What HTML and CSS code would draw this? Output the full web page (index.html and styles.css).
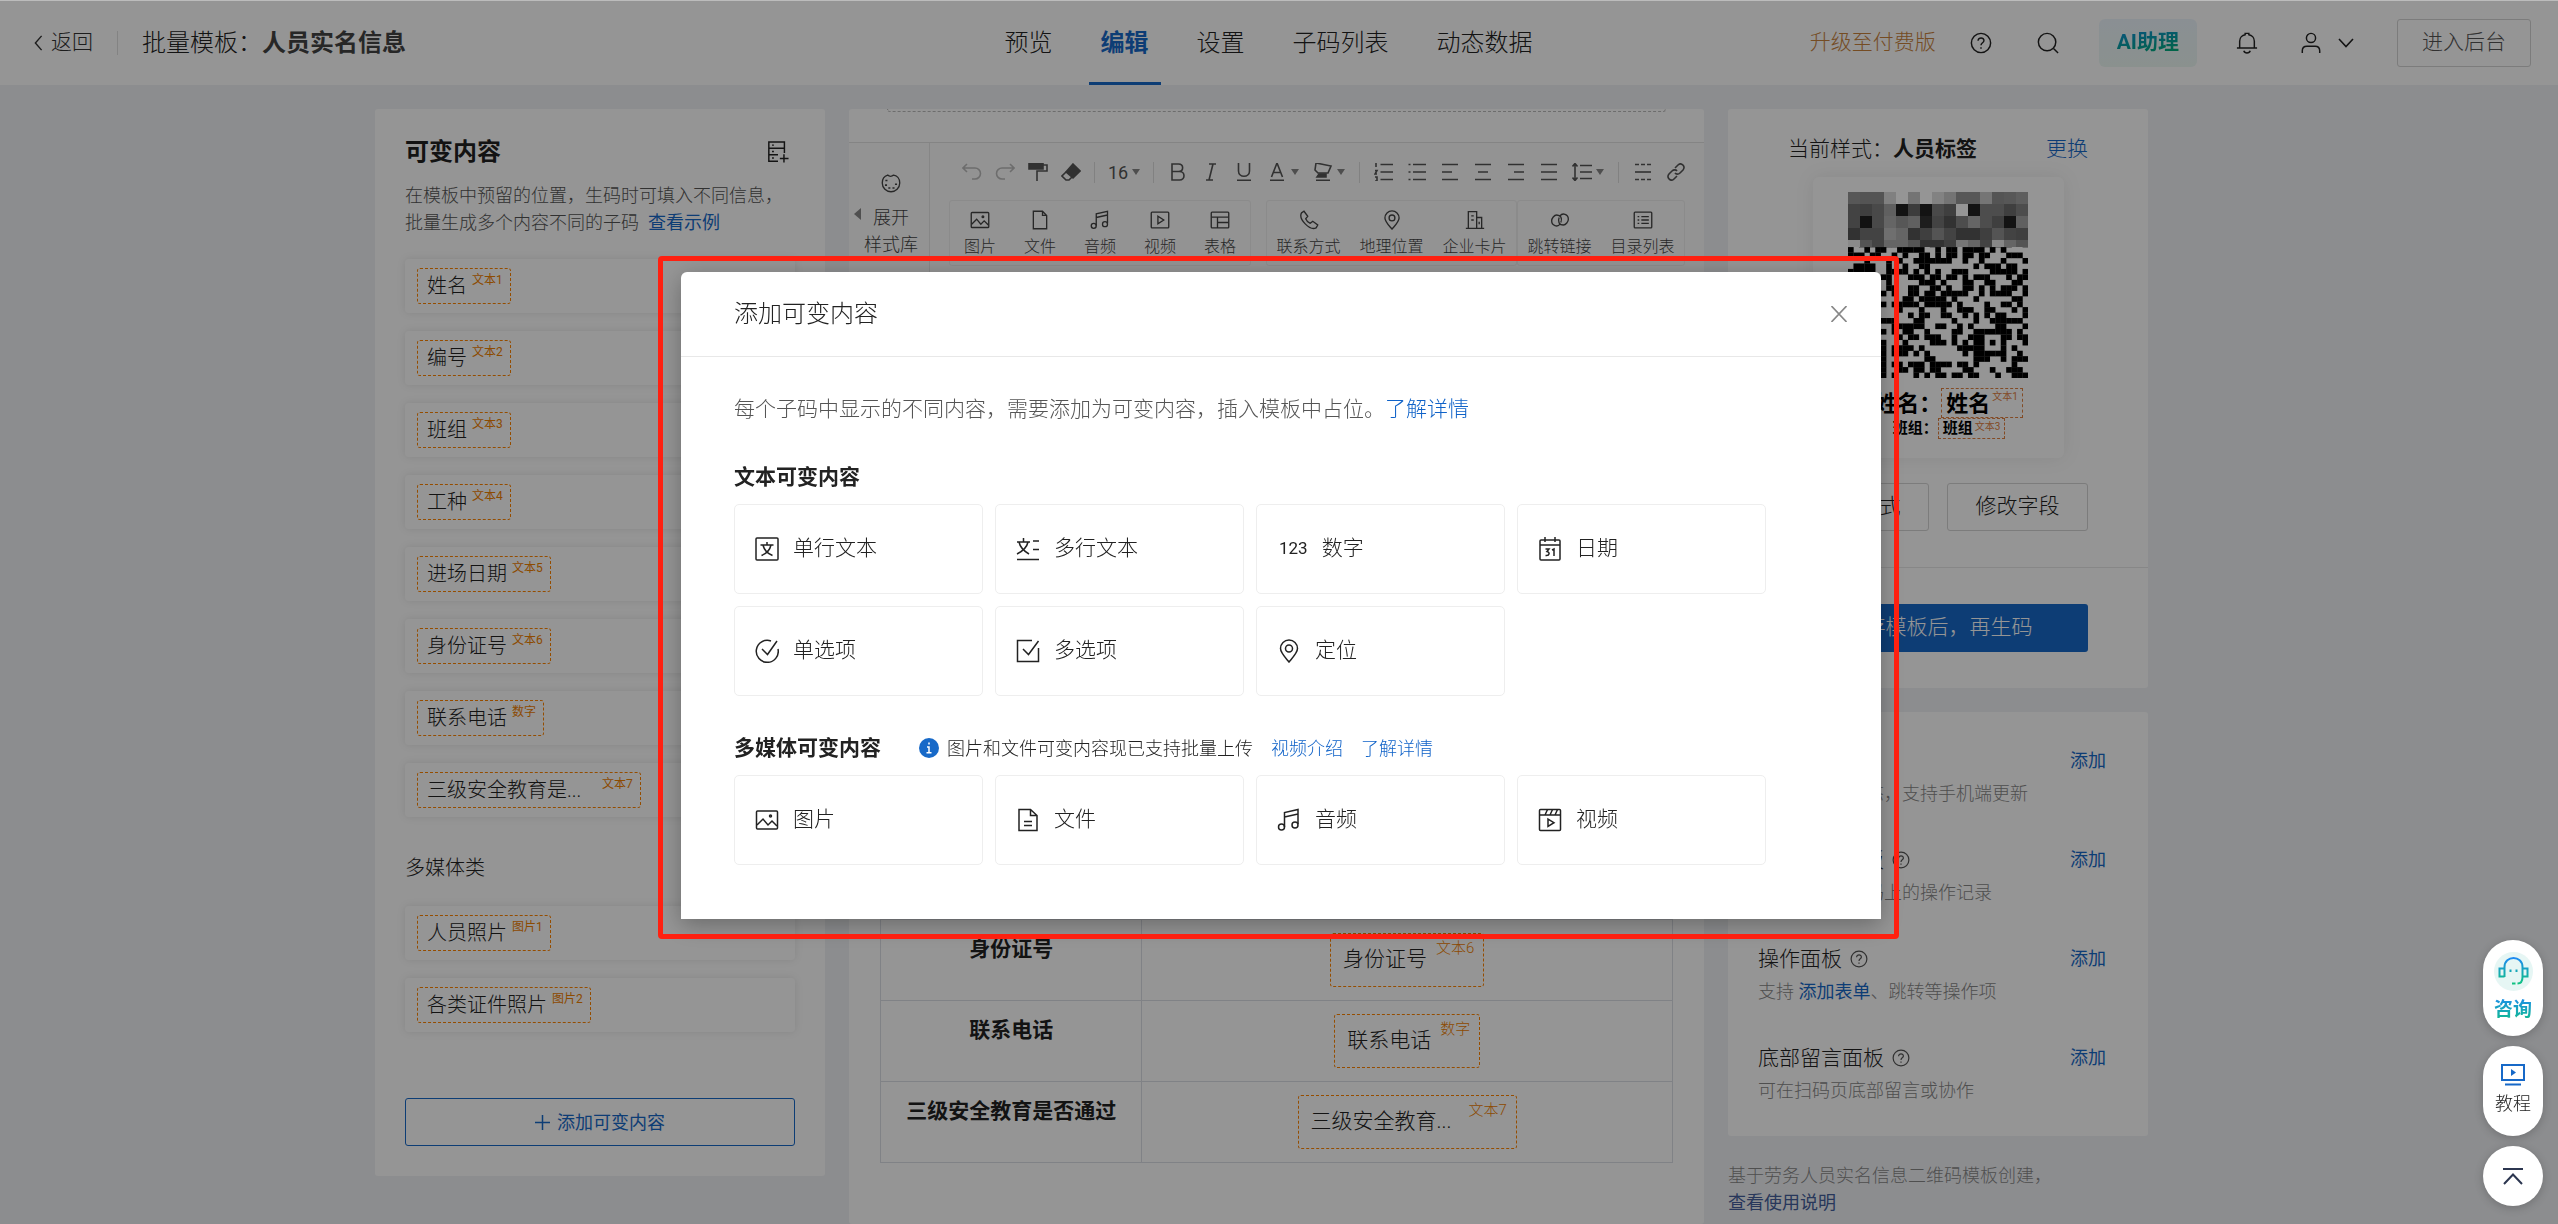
FILE: index.html
```html
<!DOCTYPE html>
<html lang="zh-CN">
<head>
    <meta charset="UTF-8">
    <meta name="viewport" content="width=device-width, initial-scale=1.0">
    <title>批量模板：人员实名信息</title>
    <link rel="stylesheet" href="styles.css">
</head>
<body>
    <!-- Shared icons -->
    <svg class="sprite" width="0" height="0" aria-hidden="true">
        <symbol id="i-help" viewBox="0 0 24 24"><circle cx="12" cy="12" r="10.5"/><path d="M8.8 9.6c0-4.2 6.6-4 6.4-.1-.1 2.300-3.200 2.300-3.200 5M12 16.600v1.800"/></symbol>
        <symbol id="i-image" viewBox="0 0 24 24"><rect x="1.500" y="3" width="21" height="18" rx="1"/><path d="M2 17l6-6 5 6 4-4 5 5"/><circle cx="15.500" cy="8" r="1"/></symbol>
        <symbol id="i-file" viewBox="0 0 24 24"><path d="M4 1.500h11l5 5v16H4zM15 1.500v5h5"/></symbol>
        <symbol id="i-music" viewBox="0 0 24 24"><path d="M7.500 19V4.500L21 1.500V16M7.500 9L21 6"/><circle cx="4.500" cy="19" r="3"/><circle cx="18" cy="17" r="3"/></symbol>
        <symbol id="i-pin" viewBox="0 0 24 24"><path d="M12 23C7 17 3.500 13.500 3.500 9.500a8.500 8.500 0 0 1 17 0C20.500 13.500 17 17 12 23z"/><circle cx="12" cy="9.500" r="3.500"/></symbol>
        <symbol id="i-caret" viewBox="0 0 8 6"><path d="M0 0h8L4 6z" fill="currentColor" stroke="none"/></symbol>
    </svg>

    <header class="topbar">
        <div class="topbar-left">
            <a class="back" href="#"><svg class="icon chevron-left" viewBox="0 0 10 18"><path d="M8.500 1L1.500 9l7 8"/></svg>返回</a>
            <span class="divider"></span>
            <div class="doc-name">批量模板：<strong>人员实名信息</strong></div>
        </div>
        <nav class="tabs">
            <a href="#">预览</a>
            <a class="active" href="#">编辑</a>
            <a href="#">设置</a>
            <a href="#">子码列表</a>
            <a href="#">动态数据</a>
        </nav>
        <div class="topbar-right">
            <a class="upgrade" href="#">升级至付费版</a>
            <button class="icon-btn help-btn" aria-label="帮助"><svg class="icon"><use href="#i-help"/></svg></button>
            <button class="icon-btn search-btn" aria-label="搜索"><svg class="icon" viewBox="0 0 24 24"><circle cx="11" cy="11" r="9.500"/><path d="M18 18l5 5"/></svg></button>
            <button class="ai-btn"><span>AI助理</span></button>
            <button class="icon-btn bell-btn" aria-label="通知"><svg class="icon" viewBox="0 0 24 24"><path d="M1 17.500h22M4 17.500V10c0-4 3-6.500 6-7V1.500h4V3c3 .5 6 3 6 7v7.500M8.500 20.500c1 3.300 6 3.300 7 0"/></svg></button>
            <button class="user-btn" aria-label="账户"><svg class="icon" viewBox="0 0 24 24"><circle cx="12" cy="6.500" r="5"/><path d="M2.500 23v-2.500c0-3 2-5 5-5h9c3 0 5 2 5 5V23"/></svg><svg class="icon chevron-down" viewBox="0 0 16 10"><path d="M1 1l7 7.500L15 1"/></svg></button>
            <button class="outline-btn console-btn">进入后台</button>
        </div>
    </header>

    <main class="layout">
        <!-- Left: variable fields -->
        <section class="panel fields">
            <div class="fields-head">
                <h2>可变内容</h2>
                <button class="icon-btn" aria-label="管理可变内容"><svg class="icon" viewBox="0 0 24 24"><path d="M12 22H2V1h17v12M2 8h17M2 15h10M18.500 14.500v9M14 19h9.500"/><path d="M5.500 4.500h2M5.500 11.500h2M5.500 18.500h2"/></svg></button>
            </div>
            <p class="fields-desc">在模板中预留的位置，生码时可填入不同信息，<br>批量生成多个内容不同的子码<a href="#">查看示例</a></p>
            <ul class="field-list">
                <li><span class="tag">姓名<sup>文本1</sup></span></li>
                <li><span class="tag">编号<sup>文本2</sup></span></li>
                <li><span class="tag">班组<sup>文本3</sup></span></li>
                <li><span class="tag">工种<sup>文本4</sup></span></li>
                <li><span class="tag">进场日期<sup>文本5</sup></span></li>
                <li><span class="tag">身份证号<sup>文本6</sup></span></li>
                <li><span class="tag">联系电话<sup>数字</sup></span></li>
                <li><span class="tag"><span class="cut">三级安全教育是...</span><sup>文本7</sup></span></li>
            </ul>
            <h3>多媒体类</h3>
            <ul class="field-list">
                <li><span class="tag">人员照片<sup>图片1</sup></span></li>
                <li><span class="tag">各类证件照片<sup>图片2</sup></span></li>
            </ul>
            <button class="add-field"><svg class="icon" viewBox="0 0 16 16"><path d="M8 0v16M0 8h16"/></svg>添加可变内容</button>
        </section>

        <!-- Middle: editor -->
        <section class="panel editor">
            <div class="cover-end"></div>
            <div class="editor-tools">
                <button class="style-lib">
                    <svg class="fold" viewBox="0 0 7 12"><path d="M7 0v12L0 6z"/></svg>
                    <svg class="icon" viewBox="0 0 24 24"><path d="M8 2.500c2 2 5 2 7 0 4 .5 7.500 4 7.500 9.500 0 6-5 10.500-10.500 10.500S1.500 18 1.500 12C1.500 7 4.500 3.500 8 2.500z"/><path d="M6.500 8v2M6 13.500v2M10 17v2M15 17v2M18 12.500v2" stroke-width="2.500"/></svg>
                    <span>展开<br>样式库</span>
                </button>
                <div class="tool-area">
                    <div class="toolbar">
                        <button class="off" aria-label="撤销"><svg class="icon" viewBox="0 0 20 18"><path d="M5 1L1 5l4 4M1 5h12a5.500 5.500 0 0 1 0 11h-3"/></svg></button>
                        <button class="off" aria-label="重做"><svg class="icon" viewBox="0 0 20 18"><path d="M15 1l4 4-4 4M19 5H7a5.500 5.500 0 0 0 0 11h3"/></svg></button>
                        <button aria-label="格式刷"><svg class="icon" viewBox="0 0 20 18"><path d="M1 0h14v6H1z" fill="currentColor"/><path d="M15 2h4v6H9v10"/></svg></button>
                        <button aria-label="清除格式"><svg class="icon" viewBox="0 0 20 18"><path d="M12 1l7 7-7 7-7-6z" fill="currentColor"/><path d="M5 9l-4 4 4 4h3l3-3"/></svg></button>
                        <i class="sep"></i>
                        <button class="size">16<svg class="caret"><use href="#i-caret"/></svg></button>
                        <i class="sep"></i>
                        <button aria-label="加粗"><svg class="icon" viewBox="0 0 20 18"><path d="M4 1h6.500c5.500 0 5.500 7.500 0 7.500H4zM4 8.500h7.500c6 0 6 8.500 0 8.500H4z"/></svg></button>
                        <button aria-label="斜体"><svg class="icon" viewBox="0 0 20 18"><path d="M8 1h7M5 17h7M12 1L8 17"/></svg></button>
                        <button aria-label="下划线"><svg class="icon" viewBox="0 0 20 18"><path d="M4.500 0v8c0 7 11 7 11 0V0M3 17.300h14"/></svg></button>
                        <button class="drop" aria-label="文字颜色"><svg class="icon" viewBox="0 0 20 18"><path d="M4.500 14L10 0l5.500 14M6.500 9.500h7M3 17.300h14"/></svg><svg class="caret"><use href="#i-caret"/></svg></button>
                        <button class="drop" aria-label="背景颜色"><svg class="icon" viewBox="0 0 20 18"><path d="M3 0l15 3-3 7H5L2 7z"/><path d="M6 11h7v3H4z" fill="currentColor"/><path d="M3 17.300h14"/></svg><svg class="caret"><use href="#i-caret"/></svg></button>
                        <i class="sep"></i>
                        <button aria-label="有序列表"><svg class="icon" viewBox="0 0 20 18"><path d="M6.500 1.500H19M6.500 9H19M6.500 16.500H19M2 0v4M1 7.500h2L1 11h2M1 14h2v4H1"/></svg></button>
                        <button aria-label="无序列表"><svg class="icon" viewBox="0 0 20 18"><path d="M6 1.500h13M6 9h13M6 16.500h13M1.500 1.500h2M1.500 9h2M1.500 16.500h2"/></svg></button>
                        <button aria-label="左对齐"><svg class="icon" viewBox="0 0 20 18"><path d="M2 1.500h16M2 9h10M2 16.500h16"/></svg></button>
                        <button aria-label="居中"><svg class="icon" viewBox="0 0 20 18"><path d="M2 1.500h16M5 9h10M2 16.500h16"/></svg></button>
                        <button aria-label="右对齐"><svg class="icon" viewBox="0 0 20 18"><path d="M2 1.500h16M8 9h10M2 16.500h16"/></svg></button>
                        <button aria-label="两端对齐"><svg class="icon" viewBox="0 0 20 18"><path d="M2 1.500h16M2 9h16M2 16.500h16"/></svg></button>
                        <button class="drop" aria-label="行高"><svg class="icon" viewBox="0 0 20 18"><path d="M8 2.500h12M8 9h12M8 15.500h12M3 1v16M.5 3.500L3 .5l2.500 3M.5 14.500l2.500 3 2.500-3"/></svg><svg class="caret"><use href="#i-caret"/></svg></button>
                        <i class="sep"></i>
                        <button aria-label="分割线"><svg class="icon" viewBox="0 0 20 18"><path d="M2 9h16"/><path d="M2 1.500h16M2 16.500h16" stroke-dasharray="4 2"/></svg></button>
                        <button aria-label="链接"><svg class="icon" viewBox="0 0 20 18"><path d="M9 5l3-3c3-3 8 1 5 5l-3 3c-1.500 1.500-4 1.500-5 0M11 13l-3 3c-3 3-8-1-5-5l3-3c1.500-1.500 4-1.500 5 0"/></svg></button>
                    </div>
                    <div class="inserts">
                        <div class="insert-box media">
                            <button><svg class="icon"><use href="#i-image"/></svg>图片</button>
                            <button><svg class="icon"><use href="#i-file"/></svg>文件</button>
                            <button><svg class="icon"><use href="#i-music"/></svg>音频</button>
                            <button><svg class="icon" viewBox="0 0 24 24"><rect x="1.500" y="2.500" width="21" height="19" rx="1"/><path d="M9.500 7.500v9l7-4.500z"/></svg>视频</button>
                            <button><svg class="icon" viewBox="0 0 24 24"><rect x="1.500" y="2.500" width="21" height="19" rx="1"/><path d="M2 8.500h20M9 8.500v13M9 15h13"/></svg>表格</button>
                        </div>
                        <div class="insert-box">
                            <button><svg class="icon" viewBox="0 0 24 24"><path d="M3 3.500L6 1.500l4.500 6L8 10.500c1 2.500 3 4.500 5.500 5.500l3-2.500 6 4.500-2 3.500C13 25 -1 11 3 3.500z"/></svg>联系方式</button>
                            <button><svg class="icon"><use href="#i-pin"/></svg>地理位置</button>
                            <button><svg class="icon" viewBox="0 0 24 24"><path d="M1 22h22M4 22V2h10v20M14 9h6v13M7.500 7h3M7.500 12h3M17 14v3"/></svg>企业卡片</button>
                        </div>
                        <div class="insert-box">
                            <button><svg class="icon" viewBox="0 0 24 24"><path d="M12 17c-3 4-10 2-10-4 0-3 3-7 6-7 5 0 7 4 5 9"/><path d="M12 7c3-4 10-2 10 4 0 3-3 7-6 7-5 0-7-4-5-9"/></svg>跳转链接</button>
                            <button><svg class="icon" viewBox="0 0 24 24"><rect x="1.500" y="2.500" width="21" height="19" rx="1"/><path d="M5.500 8h2M10 8h9M5.500 12h2M10 12h9M5.500 16h2M10 16h9"/></svg>目录列表</button>
                        </div>
                    </div>
                </div>
            </div>
            <div class="document">
                <table class="info-table">
                    <tr><th>姓名</th><td><span class="tag tag-lg">姓名<sup>文本1</sup></span></td></tr>
                    <tr><th>编号</th><td><span class="tag tag-lg">编号<sup>文本2</sup></span></td></tr>
                    <tr><th>班组</th><td><span class="tag tag-lg">班组<sup>文本3</sup></span></td></tr>
                    <tr><th>工种</th><td><span class="tag tag-lg">工种<sup>文本4</sup></span></td></tr>
                    <tr><th>进场日期</th><td><span class="tag tag-lg">进场日期<sup>文本5</sup></span></td></tr>
                    <tr><th>身份证号</th><td><span class="tag tag-lg">身份证号<sup>文本6</sup></span></td></tr>
                    <tr><th>联系电话</th><td><span class="tag tag-lg">联系电话<sup>数字</sup></span></td></tr>
                    <tr><th>三级安全教育是否通过</th><td><span class="tag tag-lg"><span class="cut">三级安全教育...</span><sup>文本7</sup></span></td></tr>
                </table>
            </div>
        </section>

        <!-- Right: label style and extra panels -->
        <aside class="side">
            <section class="panel style-panel">
                <div class="style-head">
                    <span>当前样式：<strong>人员标签</strong></span>
                    <a href="#">更换</a>
                </div>
                <div class="label-card">
                    <svg class="qr" id="qr" viewBox="0 0 180 186" role="img" aria-label="二维码"></svg>
                    <div class="label-line">姓名：<span class="mark">姓名<sup>文本1</sup></span></div>
                    <div class="label-line small">班组：<span class="mark">班组<sup>文本3</sup></span></div>
                </div>
                <div class="style-actions">
                    <button class="outline-btn">修改样式</button>
                    <button class="outline-btn">修改字段</button>
                </div>
                <div class="save-row">
                    <button class="primary-btn">保存模板后，再生码</button>
                </div>
            </section>
            <section class="panel extras">
                <div class="extra">
                    <div class="extra-head"><span>二维码状态</span><a href="#">添加</a></div>
                    <p>展示二维码状态，支持手机端更新</p>
                </div>
                <div class="extra">
                    <div class="extra-head"><span>底部动态面板<svg class="icon"><use href="#i-help"/></svg></span><a href="#">添加</a></div>
                    <p>展示当前二维码上的操作记录</p>
                </div>
                <div class="extra">
                    <div class="extra-head"><span>操作面板<svg class="icon"><use href="#i-help"/></svg></span><a href="#">添加</a></div>
                    <p>支持 <a href="#">添加表单</a>、跳转等操作项</p>
                </div>
                <div class="extra">
                    <div class="extra-head"><span>底部留言面板<svg class="icon"><use href="#i-help"/></svg></span><a href="#">添加</a></div>
                    <p>可在扫码页底部留言或协作</p>
                </div>
            </section>
            <p class="origin">基于劳务人员实名信息二维码模板创建，<br><a href="#">查看使用说明</a></p>
        </aside>
    </main>

    <!-- Add field dialog -->
    <div class="mask">
        <div class="modal" role="dialog" aria-labelledby="modal-title">
            <div class="modal-head">
                <h2 id="modal-title">添加可变内容</h2>
                <button class="icon-btn close" aria-label="关闭"><svg class="icon" viewBox="0 0 16 16"><path d="M.5 0l15 16M15.500 0l-15 16"/></svg></button>
            </div>
            <div class="modal-body">
                <p class="intro">每个子码中显示的不同内容，需要添加为可变内容，插入模板中占位。<a href="#">了解详情</a></p>
                <h3>文本可变内容</h3>
                <div class="cards">
                    <button><svg class="icon" viewBox="0 0 24 24"><rect x="1" y="1" width="22" height="22" rx="1"/><path d="M5.500 8h13M12 5v3M8 8c1 4.500 4.500 8.500 9.500 10.500M16 8c-1 4.500-4.500 8.500-9.500 10.500"/></svg>单行文本</button>
                    <button><svg class="icon" viewBox="0 0 24 24"><path d="M1 5h13M7.500 1v4M3 5c1 5 5 9 10 12M12 5C11 10 7 14 1 17M17 4h6M17 12.500h6M1 22.500h22"/></svg>多行文本</button>
                    <button><span class="num">123</span>数字</button>
                    <button><svg class="icon" viewBox="0 0 24 24"><rect x="2" y="3" width="20" height="20" rx="1"/><path d="M2 8h20M7 0v5M17 0v5M7.500 12h3.500l-2 2.500c3 .5 3 4.500-1.500 4M14 13l2-1v7"/></svg>日期</button>
                    <button><svg class="icon" viewBox="0 0 24 24"><path d="M16 2A11 11 0 1 0 23 10M7 10l5.500 5.500L22 2"/></svg>单选项</button>
                    <button><svg class="icon" viewBox="0 0 24 24"><path d="M16 1.500H1.500v21h21V9M7 10l5.500 5.500L22.500 2"/></svg>多选项</button>
                    <button><svg class="icon"><use href="#i-pin"/></svg>定位</button>
                </div>
                <div class="media-head">
                    <h3>多媒体可变内容</h3>
                    <svg class="info" viewBox="0 0 20 20"><circle cx="10" cy="10" r="10"/><path d="M10 4.500v2M8 9h2v5.500M7.500 14.800h5"/></svg>
                    <span>图片和文件可变内容现已支持批量上传</span>
                    <a href="#">视频介绍</a>
                    <a href="#">了解详情</a>
                </div>
                <div class="cards">
                    <button><svg class="icon"><use href="#i-image"/></svg>图片</button>
                    <button><svg class="icon" viewBox="0 0 24 24"><path d="M3 1.500h11.500L21 7.500v15H3zM14.500 1.500v6H21M8 13.500h8M8 17.500h8"/></svg>文件</button>
                    <button><svg class="icon"><use href="#i-music"/></svg>音频</button>
                    <button><svg class="icon" viewBox="0 0 24 24"><rect x="1.500" y="1.500" width="21" height="21" rx="1"/><path d="M2 7h20M7 7l2.500-5.500M12 7l2.500-5.500M17 7l2.500-5.500M10 11v7.500l6-3.800z"/></svg>视频</button>
                </div>
            </div>
            <div class="highlight"></div>
        </div>
    </div>

    <!-- Floating shortcuts -->
    <div class="floats">
        <button class="consult">
            <svg viewBox="0 0 39 39">
                <defs><linearGradient id="g" x1="0" y1="5" x2="0" y2="33" gradientUnits="userSpaceOnUse"><stop offset="0" stop-color="#1e88f5"/><stop offset="1" stop-color="#0fc57c"/></linearGradient></defs>
                <circle cx="19.500" cy="19.500" r="19.500" fill="#e6f6f4"/>
                <path d="M10.500 25V15c0-12 18-12 18 0v10c0 4-2 6.500-5 6.500M10.500 16.500H5.500v8h5M28.500 16.500h5v8h-5M18 31.500h3.500M16.500 17.500v2.500M22.500 17.500v2.500" fill="none" stroke="url(#g)" stroke-width="2"/>
            </svg>
            <span>咨询</span>
        </button>
        <button class="guide">
            <svg viewBox="0 0 24 22"><path d="M1 1h22v15H1zM4 20.500h16" fill="none" stroke="#1769c8" stroke-width="2"/><path d="M10 5v7l5-3.500z" fill="#1769c8"/></svg>
            <span>教程</span>
        </button>
        <button class="to-top" aria-label="回到顶部"><svg viewBox="0 0 20 17"><path d="M0 1h20M1 16l9-9.500L19 16" fill="none" stroke="#2c3650" stroke-width="2"/></svg></button>
    </div>

    <script src="qr.js"></script>
</body>
</html>
```
FILE: qr.js
```js
// Draws the label's code: modules first, then the mosaic over the top rows
const mosaic = [
    [88, 85, 85, 128, 150, 116, 149, 130, 116, 87, 87, 117, 85, 87, 95],
    [68, 64, 74, 96, 20, 60, 20, 74, 64, 149, 20, 78, 78, 64, 78],
    [68, 18, 74, 102, 88, 96, 30, 68, 51, 78, 102, 78, 64, 20, 96],
    [51, 68, 68, 112, 102, 51, 64, 85, 68, 51, 51, 64, 85, 68, 64],
    [138, 85, 68, 102, 102, 85, 51, 51, 64, 119, 102, 68, 136, 102, 85]
];
const qr = document.getElementById('qr');
const count = 33;
const cell = 180 / count;

function addRect(x, y, w, h, fill) {
    const rect = document.createElementNS('http://www.w3.org/2000/svg', 'rect');
    rect.setAttribute('x', x);
    rect.setAttribute('y', y);
    rect.setAttribute('width', w);
    rect.setAttribute('height', h);
    rect.setAttribute('fill', fill);
    qr.appendChild(rect);
}

function isDark(row, col, noise) {
    // alignment square
    const d = Math.max(Math.abs(row - 26), Math.abs(col - 26));
    if (d <= 2) return d !== 1;
    // lower left finder
    if (row >= 25 && col <= 7) {
        const f = Math.max(Math.abs(row - 29), Math.abs(col - 3));
        return f !== 2 && f < 4;
    }
    return noise > 0.48;
}

let seed = 41;
for (let row = 8; row < count; row++) {
    for (let col = 0; col < count; col++) {
        seed = (seed * 16807) % 2147483647;
        if (isDark(row, col, seed / 2147483647)) {
            addRect(col * cell, 6 + row * cell, cell + 0.2, cell + 0.2, '#000');
        }
    }
}

mosaic.forEach((line, row) => {
    line.forEach((v, col) => {
        const g = Math.min(255, Math.round(v / 0.585));
        addRect(col * 12, row * 12, 12, row === 4 ? 7 : 12, `rgb(${g}, ${g}, ${g})`);
    });
});
```
FILE: styles.css
```css
* {
    box-sizing: border-box;
}

body {
    margin: 0;
    height: 100vh;
    overflow: hidden;
    background: #f0f2f5;
    color: #222;
    font-family: Roboto, "Noto Sans CJK SC", sans-serif;
    font-size: 21px;
    font-weight: 300;
    line-height: 1.5;
}

h2, h3, p, ul {
    margin: 0;
    padding: 0;
}

ul {
    list-style: none;
}

a {
    color: #1769c8;
    text-decoration: none;
}

strong, th {
    font-weight: 700;
}

button {
    padding: 0;
    border: none;
    background: none;
    color: inherit;
    font: inherit;
    cursor: pointer;
}

.sprite {
    display: block;
}

.icon {
    width: 22px;
    height: 22px;
    fill: none;
    stroke: currentColor;
    stroke-width: 1.6;
    flex: none;
}

.icon-btn {
    display: flex;
    align-items: center;
}

.panel {
    background: #fff;
    border-radius: 3px;
}

/* Top bar */
.topbar {
    display: grid;
    grid-template-columns: 1fr auto 1fr;
    height: 85px;
    padding: 0 27px 0 34px;
    background: #fff;
    border-top: 1px solid #bcbcbc;
}

.topbar-left, .topbar-right {
    display: flex;
    align-items: center;
}

.back {
    display: flex;
    align-items: center;
    gap: 8px;
    color: #333;
}

.chevron-left {
    width: 9px;
    height: 16px;
}

.divider {
    width: 1px;
    height: 24px;
    margin: 0 24px;
    background: #e0e0e0;
}

.doc-name {
    font-size: 24px;
}

.doc-name strong {
    color: #444;
}

.tabs {
    display: flex;
    gap: 24px;
    margin-right: 28px;
    font-size: 24px;
}

.tabs a {
    display: flex;
    align-items: center;
    padding: 3px 12px 0;
    border-bottom: 3px solid transparent;
    color: #222;
}

.tabs .active {
    border-color: #1769c8;
    color: #1769c8;
    font-weight: 700;
}

.topbar-right {
    justify-content: flex-end;
}

.upgrade {
    color: #c8823c;
}

.help-btn {
    margin-left: 34px;
}

.search-btn {
    margin: 0 40px 0 45px;
}

.ai-btn {
    height: 48px;
    padding: 0 18px;
    border-radius: 6px;
    background: linear-gradient(#edf5fc, #ecf8f4);
    font-weight: 700;
}

.ai-btn span, .consult span {
    background: linear-gradient(#1e88f5, #0fc57c);
    background-clip: text;
    color: transparent;
}

.ai-btn span {
    background-image: linear-gradient(170deg, #108fd8, #00b070);
}

.bell-btn {
    margin-left: 39px;
}

.user-btn {
    display: flex;
    align-items: center;
    gap: 16px;
    margin: 0 43px 0 42px;
}

.chevron-down {
    width: 16px;
    height: 10px;
}

.outline-btn {
    height: 48px;
    border: 1px solid #d4d4d4;
    border-radius: 3px;
}

.console-btn {
    padding: 0 24px;
    color: #555;
}

/* Three columns */
.layout {
    display: grid;
    grid-template-columns: 450px minmax(0, 1fr) 420px;
    align-items: start;
    gap: 24px;
    padding: 24px 410px 0 375px;
}

/* Field list */
.fields {
    padding: 25px 30px 30px;
}

.fields-head {
    display: flex;
    justify-content: space-between;
    padding-right: 6px;
}

.fields-head h2 {
    font-size: 24px;
    line-height: 36px;
}

.fields-desc {
    margin: 12px 0 23px;
    font-size: 18px;
    line-height: 27px;
    color: #555;
}

.fields-desc a {
    margin-left: 9px;
}

.fields-desc a, .add-field, .extra a, .origin a {
    font-weight: 400;
}

.field-list {
    display: flex;
    flex-direction: column;
    gap: 18px;
}

.field-list li {
    display: flex;
    align-items: center;
    height: 54px;
    padding: 0 12px;
    border-radius: 4px;
    box-shadow: 0 0 8px rgba(0, 0, 0, 0.1);
}

.tag {
    display: flex;
    align-items: center;
    gap: 5px;
    width: fit-content;
    height: 36px;
    padding: 0 7px 0 9px;
    border: 1px dashed #ff8400;
    border-radius: 3px;
    font-size: 20px;
}

.tag sup {
    align-self: flex-start;
    font-size: 12px;
    font-weight: 400;
    line-height: 22px;
    color: #f08000;
}

.tag .cut {
    width: 170px;
}

.fields h3 {
    margin: 36px 0 23px;
    font-size: 20px;
    font-weight: 300;
    line-height: 30px;
}

.add-field {
    display: flex;
    align-items: center;
    justify-content: center;
    gap: 7px;
    width: 100%;
    height: 48px;
    margin-top: 66px;
    border: 1px solid #1769c8;
    border-radius: 3px;
    color: #1769c8;
    font-size: 18px;
}

.add-field .icon {
    width: 15px;
    height: 15px;
}

/* Editor */
.editor {
    min-height: 1115px;
}

.cover-end {
    height: 3px;
    margin: 0 38px 30px;
    border: 1px dashed #bbb;
    border-top: none;
    border-radius: 0 0 4px 4px;
}

.editor-tools {
    display: flex;
    border-top: 1px solid #e2e2e2;
    background: #fcfcfc;
}

.style-lib {
    position: relative;
    display: flex;
    flex-direction: column;
    align-items: center;
    gap: 11px;
    width: 81px;
    padding: 30px 0 0 4px;
    border-right: 1px solid #e6e6e6;
    font-size: 18px;
    line-height: 27px;
    color: #444;
}

.style-lib .icon {
    width: 20px;
    height: 20px;
}

.style-lib .fold {
    position: absolute;
    left: 5px;
    top: 65px;
    width: 7px;
    height: 12px;
    fill: #888;
}

.tool-area {
    flex: 1;
    padding: 12px 10px 12px 19px;
}

.toolbar {
    display: flex;
    align-items: center;
    height: 34px;
    padding-left: 6px;
    color: #555;
}

.toolbar button {
    display: flex;
    align-items: center;
    justify-content: center;
    width: 33px;
    height: 34px;
}

.toolbar .icon {
    width: 20px;
    height: 18px;
}

.toolbar .off {
    color: #bbb;
}

.toolbar .size {
    gap: 4px;
    width: 44px;
    font-size: 18px;
    font-weight: 400;
}

.toolbar .drop {
    gap: 4px;
    width: 46px;
}

.caret {
    width: 8px;
    height: 6px;
    opacity: 0.7;
}

.sep {
    width: 1px;
    height: 21px;
    margin: 0 7px;
    background: #ddd;
}

.inserts {
    display: flex;
    margin-top: 11px;
}

.insert-box {
    display: flex;
    height: 66px;
    border: 1px solid #eee;
    border-radius: 3px;
}

.insert-box.media {
    margin-right: 15px;
}

.insert-box button {
    display: flex;
    flex-direction: column;
    align-items: center;
    gap: 5px;
    width: 83px;
    padding-top: 9px;
    font-size: 16px;
    line-height: 24px;
    color: #444;
}

.insert-box.media button {
    width: 60px;
}

.insert-box .icon {
    width: 20px;
    height: 20px;
}

.document {
    padding: 236px 31px 60px;
}

.info-table {
    width: 100%;
    border-collapse: collapse;
}

.info-table th, .info-table td {
    padding: 13px 0;
    border: 1px solid #dcdfe6;
    vertical-align: top;
}

.info-table th {
    width: 33%;
    line-height: 32px;
}

.tag-lg {
    gap: 9px;
    height: 54px;
    margin: 0 auto;
    padding: 0 9px 0 12px;
    font-size: 21px;
}

.tag-lg sup {
    font-size: 15px;
    font-weight: 300;
    line-height: 28px;
}

.tag-lg .cut {
    width: 149px;
}

/* Right column */
.style-head {
    display: flex;
    justify-content: space-between;
    padding: 24px 60px 12px;
    line-height: 32px;
}

.label-card {
    width: 251px;
    height: 281px;
    margin: 0 auto;
    padding-top: 15px;
    border-radius: 6px;
    box-shadow: 0 0 20px rgba(0, 0, 0, 0.08);
}

.qr {
    display: block;
    width: 180px;
    height: 186px;
    margin: 0 auto 10px;
}

.label-line {
    display: flex;
    align-items: center;
    justify-content: center;
    height: 30px;
    padding-left: 22px;
    font-size: 22px;
    font-weight: 700;
    color: #000;
}

.label-line.small {
    height: 21px;
    font-size: 15px;
}

.mark {
    display: flex;
    align-items: center;
    gap: 2px;
    height: 100%;
    padding: 0 4px;
    border: 1px dashed #e08040;
}

.mark sup {
    align-self: flex-start;
    font-size: 10px;
    font-weight: 400;
    line-height: 16px;
    color: #e08040;
}

.style-actions {
    display: grid;
    grid-template-columns: 1fr 1fr;
    gap: 18px;
    padding: 25px 60px 36px;
    border-bottom: 1px solid #e8e8e8;
}

.save-row {
    padding: 36px 60px;
}

.primary-btn {
    width: 100%;
    height: 48px;
    border-radius: 3px;
    background: #1769c8;
    color: #fff;
}

.extras {
    display: flex;
    flex-direction: column;
    gap: 33px;
    margin-top: 24px;
    padding: 31px 42px 30px 30px;
}

.extra-head {
    display: flex;
    justify-content: space-between;
    line-height: 36px;
}

.extra-head span {
    display: flex;
    align-items: center;
    gap: 8px;
}

.extra-head .icon {
    width: 18px;
    height: 18px;
    color: #555;
}

.extra-head a {
    font-size: 18px;
}

.extra p, .origin {
    font-size: 18px;
    line-height: 30px;
    color: #888;
}

.origin {
    margin-top: 26px;
    line-height: 27px;
}

.origin a {
    color: #455f9c;
}

/* Dialog */
.mask {
    position: fixed;
    inset: 1px 0 0;
    display: flex;
    align-items: flex-start;
    justify-content: center;
    padding: 271px 0 0 4px;
    background: rgba(0, 0, 0, 0.415);
}

.modal {
    position: relative;
    width: 1200px;
    border-radius: 6px 6px 0 0;
    background: #fff;
    box-shadow: 0 6px 24px rgba(0, 0, 0, 0.3);
}

.modal-head {
    display: flex;
    align-items: center;
    justify-content: space-between;
    height: 85px;
    padding: 0 34px 0 53px;
    border-bottom: 1px solid #e8e8e8;
}

.modal-head h2 {
    font-size: 24px;
    font-weight: 300;
}

.close {
    color: #888;
}

.close .icon {
    width: 16px;
    height: 16px;
}

.modal-body {
    padding: 36px 53px 54px;
}

.intro {
    line-height: 32px;
    color: #555;
}

.intro a, .media-head a {
    color: #0f62c8;
}

.modal-body h3 {
    font-size: 21px;
    line-height: 32px;
}

.intro + h3 {
    margin: 36px 0 11px;
}

.cards {
    display: grid;
    grid-template-columns: repeat(4, 249px);
    gap: 12px;
}

.cards button {
    display: flex;
    align-items: center;
    gap: 14px;
    height: 90px;
    padding: 0 20px;
    border: 1px solid #eee;
    border-radius: 5px;
}

.cards .icon {
    width: 24px;
    height: 24px;
    stroke-width: 1.5;
}

.num {
    padding-left: 2px;
    font-size: 17px;
    font-weight: 400;
}

.media-head {
    display: flex;
    align-items: center;
    margin: 36px 0 11px;
    font-size: 18px;
}

.media-head h3 {
    margin-right: 38px;
}

.media-head a {
    margin-left: 18px;
}

.info {
    width: 20px;
    height: 20px;
    margin-right: 8px;
    fill: #1769c8;
    stroke: #fff;
    stroke-width: 1.5;
}

.info circle {
    stroke: none;
}

.highlight {
    position: absolute;
    inset: -16px -18px -20px -23px;
    border: 5px solid #ff2010;
    border-radius: 4px;
    pointer-events: none;
}

/* Floating shortcuts */
.floats {
    position: fixed;
    right: 15px;
    bottom: 18px;
    display: flex;
    flex-direction: column;
    gap: 10px;
}

.floats button {
    display: flex;
    flex-direction: column;
    align-items: center;
    justify-content: center;
    width: 60px;
    height: 60px;
    border-radius: 30px;
    background: #fff;
    box-shadow: 0 2px 10px rgba(0, 0, 0, 0.2);
    font-size: 18px;
    line-height: 30px;
}

.floats .consult {
    gap: 4px;
    height: 96px;
    font-size: 19px;
    font-weight: 700;
}

.floats .guide {
    gap: 3px;
    height: 90px;
}

.consult svg {
    width: 39px;
    height: 39px;
}

.guide svg {
    width: 24px;
    height: 22px;
}

.to-top svg {
    width: 20px;
    height: 17px;
}
```
